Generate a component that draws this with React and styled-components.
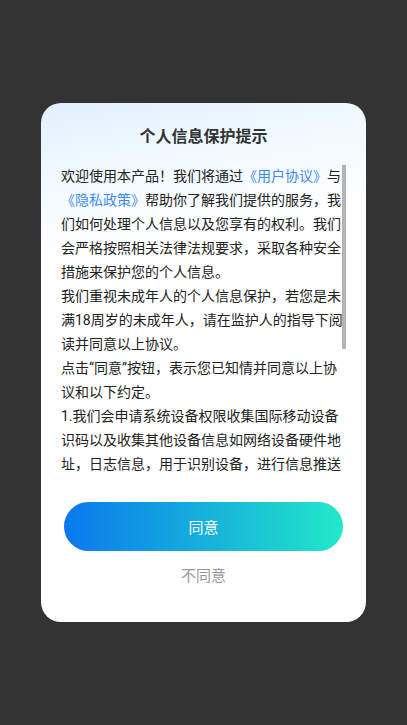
import React, { useEffect, useRef, useState } from 'react';
import styled, { createGlobalStyle } from 'styled-components';

const GlobalStyle = createGlobalStyle`
  html, body {
    margin: 0;
    padding: 0;
    background: #333333;
    font-family: "Roboto", "Noto Sans CJK SC", sans-serif;
  }
`;

const paragraphs = [
  '我们重视未成年人的个人信息保护，若您是未满18周岁的未成年人，请在监护人的指导下阅读并同意以上协议。',
  '点击“同意”按钮，表示您已知情并同意以上协议和以下约定。',
  '1.我们会申请系统设备权限收集国际移动设备识码以及收集其他设备信息如网络设备硬件地址，日志信息，用于识别设备，进行信息推送和安全风控，并申请存储权限，用于下载及缓存相关文件。',
  '2.上述权限以及摄像头、麦克风、相册、存储空间、GPS等敏感权限均不会默认或强制开启收集信息。',
  '3.我们会采取业界先进的安全措施保护您的信息安全。',
  '4.未经您同意，我们不会从第三方处获取、共享或向其提供您的信息。',
];

function App() {
  const scrollRef = useRef(null);
  const contentRef = useRef(null);
  const [thumb, setThumb] = useState({ top: 0, height: 0 });

  useEffect(() => {
    const el = scrollRef.current;
    if (!el) return;
    const update = () => {
      const ratio = el.clientHeight / el.scrollHeight;
      if (ratio >= 1) {
        setThumb({ top: 0, height: 0 });
        return;
      }
      setThumb({
        top: el.scrollTop * ratio,
        height: el.clientHeight * ratio,
      });
    };
    update();
    el.addEventListener('scroll', update);
    const ro = new ResizeObserver(update);
    ro.observe(el);
    if (contentRef.current) ro.observe(contentRef.current);
    if (document.fonts) document.fonts.ready.then(update);
    return () => {
      el.removeEventListener('scroll', update);
      ro.disconnect();
    };
  }, []);

  return (
    <>
      <GlobalStyle />
      <Screen>
        <Dialog>
          <Title>个人信息保护提示</Title>
          <ScrollArea>
            <Scroller ref={scrollRef}>
              <div ref={contentRef}>
                <Paragraph>
                  欢迎使用本产品！我们将通过<Link>《用户协议》</Link>与<Link>《隐私政策》</Link>帮助你了解我们提供的服务，我们如何处理个人信息以及您享有的权利。我们会严格按照相关法律法规要求，采取各种安全措施来保护您的个人信息。
                </Paragraph>
                {paragraphs.map((p, i) => (
                  <Paragraph key={i}>{p}</Paragraph>
                ))}
              </div>
            </Scroller>
            {thumb.height > 0 && (
              <Thumb style={{ top: thumb.top + 1, height: thumb.height }} />
            )}
          </ScrollArea>
          <AgreeButton>同意</AgreeButton>
          <Decline>不同意</Decline>
        </Dialog>
      </Screen>
    </>
  );
}

export default App;

const Screen = styled.div`
  width: 100%;
  min-height: 100vh;
  display: flex;
  align-items: center;
  justify-content: center;
`;

const Dialog = styled.div`
  width: 325px;
  height: 519px;
  box-sizing: border-box;
  border-radius: 20px;
  background: linear-gradient(170deg, #e3eeff 0%, #eef8ff 60px, #ffffff 160px);
  display: flex;
  flex-direction: column;
  overflow: hidden;
`;

const Title = styled.div`
  margin-top: 23px;
  margin-bottom: 16px;
  font-size: 16px;
  line-height: 22px;
  font-weight: 700;
  color: #333;
  text-align: center;
`;

const ScrollArea = styled.div`
  position: relative;
  margin: 0 20px;
  height: 312px;
`;

const Scroller = styled.div`
  height: 100%;
  overflow-y: auto;
  scrollbar-width: none;

  &::-webkit-scrollbar {
    display: none;
  }
`;

const Thumb = styled.div`
  position: absolute;
  right: 0;
  width: 4px;
  background: #b4b4b4;
`;

const Paragraph = styled.p`
  margin: 0;
  font-size: 14px;
  line-height: 24px;
  color: #222;
`;

const Link = styled.span`
  color: #3d8af0;
`;

const AgreeButton = styled.button`
  margin: 26px 23px 0;
  height: 49px;
  flex-shrink: 0;
  border: none;
  border-radius: 25px;
  background: linear-gradient(90deg, #0a78ee 0%, #22e8c8 100%);
  color: #fff;
  font-family: inherit;
  font-size: 15px;
  cursor: pointer;
`;

const Decline = styled.div`
  margin-top: 15px;
  font-size: 15px;
  line-height: 20px;
  color: #999;
  text-align: center;
`;
